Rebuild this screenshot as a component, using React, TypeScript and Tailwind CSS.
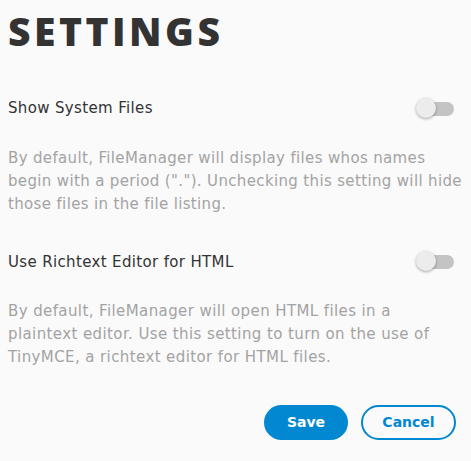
import { useState } from "react";

function Toggle({ on, onChange }: { on: boolean; onChange: (v: boolean) => void }) {
  return (
    <button
      type="button"
      onClick={() => onChange(!on)}
      className="relative h-[21px] w-[38px] shrink-0"
    >
      <span
        className={`absolute right-0 top-[4px] h-[14px] w-[34px] rounded-full ${
          on ? "bg-[#8cc6ea]" : "bg-[#c4c4c4]"
        }`}
      />
      <span
        className={`absolute top-0 h-[20px] w-[20px] rounded-full shadow-[0_1px_3px_rgba(0,0,0,0.35)] ${
          on ? "left-[18px] bg-[#0288d1]" : "left-0 bg-[#ececec]"
        }`}
      />
    </button>
  );
}

function SettingRow({
  label,
  description,
  descClass = "tracking-[0.35px]",
}: {
  label: string;
  description: string;
  descClass?: string;
}) {
  const [on, setOn] = useState(false);
  return (
    <div>
      <div className="flex items-center justify-between pr-[9px]">
        <span className="text-[15px] tracking-[0.35px] text-[#333]">{label}</span>
        <Toggle on={on} onChange={setOn} />
      </div>
      <p className={`mt-[27px] text-[15px] leading-[23px] text-[#a3a3a3] ${descClass}`}>
        {description}
      </p>
    </div>
  );
}

export default function App() {
  return (
    <div
      className="min-h-[461px] bg-[#fafafa] px-[8px] pt-[8px]"
      style={{ fontFamily: '"DejaVu Sans", "Liberation Sans", sans-serif' }}
    >
      <h1
        className="text-[39px] font-extrabold leading-[46px] tracking-[3.5px] text-[#333]"
        style={{ fontFamily: '"Open Sans", "Liberation Sans", sans-serif' }}
      >
        SETTINGS
      </h1>
      <div className="mt-[43px] flex flex-col gap-[35px]">
        <SettingRow
          label="Show System Files"
          description={'By default, FileManager will display files whos names begin with a period ("."). Unchecking this setting will hide those files in the file listing.'}
        />
        <SettingRow
          label="Use Richtext Editor for HTML"
          description="By default, FileManager will open HTML files in a plaintext editor. Use this setting to turn on the use of TinyMCE, a richtext editor for HTML files."
          descClass="tracking-[0.4px]"
        />
      </div>
      <div className="mt-[36px] flex justify-end gap-[13px] pr-[7px]">
        <button
          type="button"
          className="h-[35px] w-[84px] rounded-full bg-[#0288d1] text-[14px] font-bold text-white"
        >
          Save
        </button>
        <button
          type="button"
          className="h-[35px] w-[95px] rounded-full border-2 border-[#0288d1] text-[14px] font-bold text-[#0288d1]"
        >
          Cancel
        </button>
      </div>
    </div>
  );
}
